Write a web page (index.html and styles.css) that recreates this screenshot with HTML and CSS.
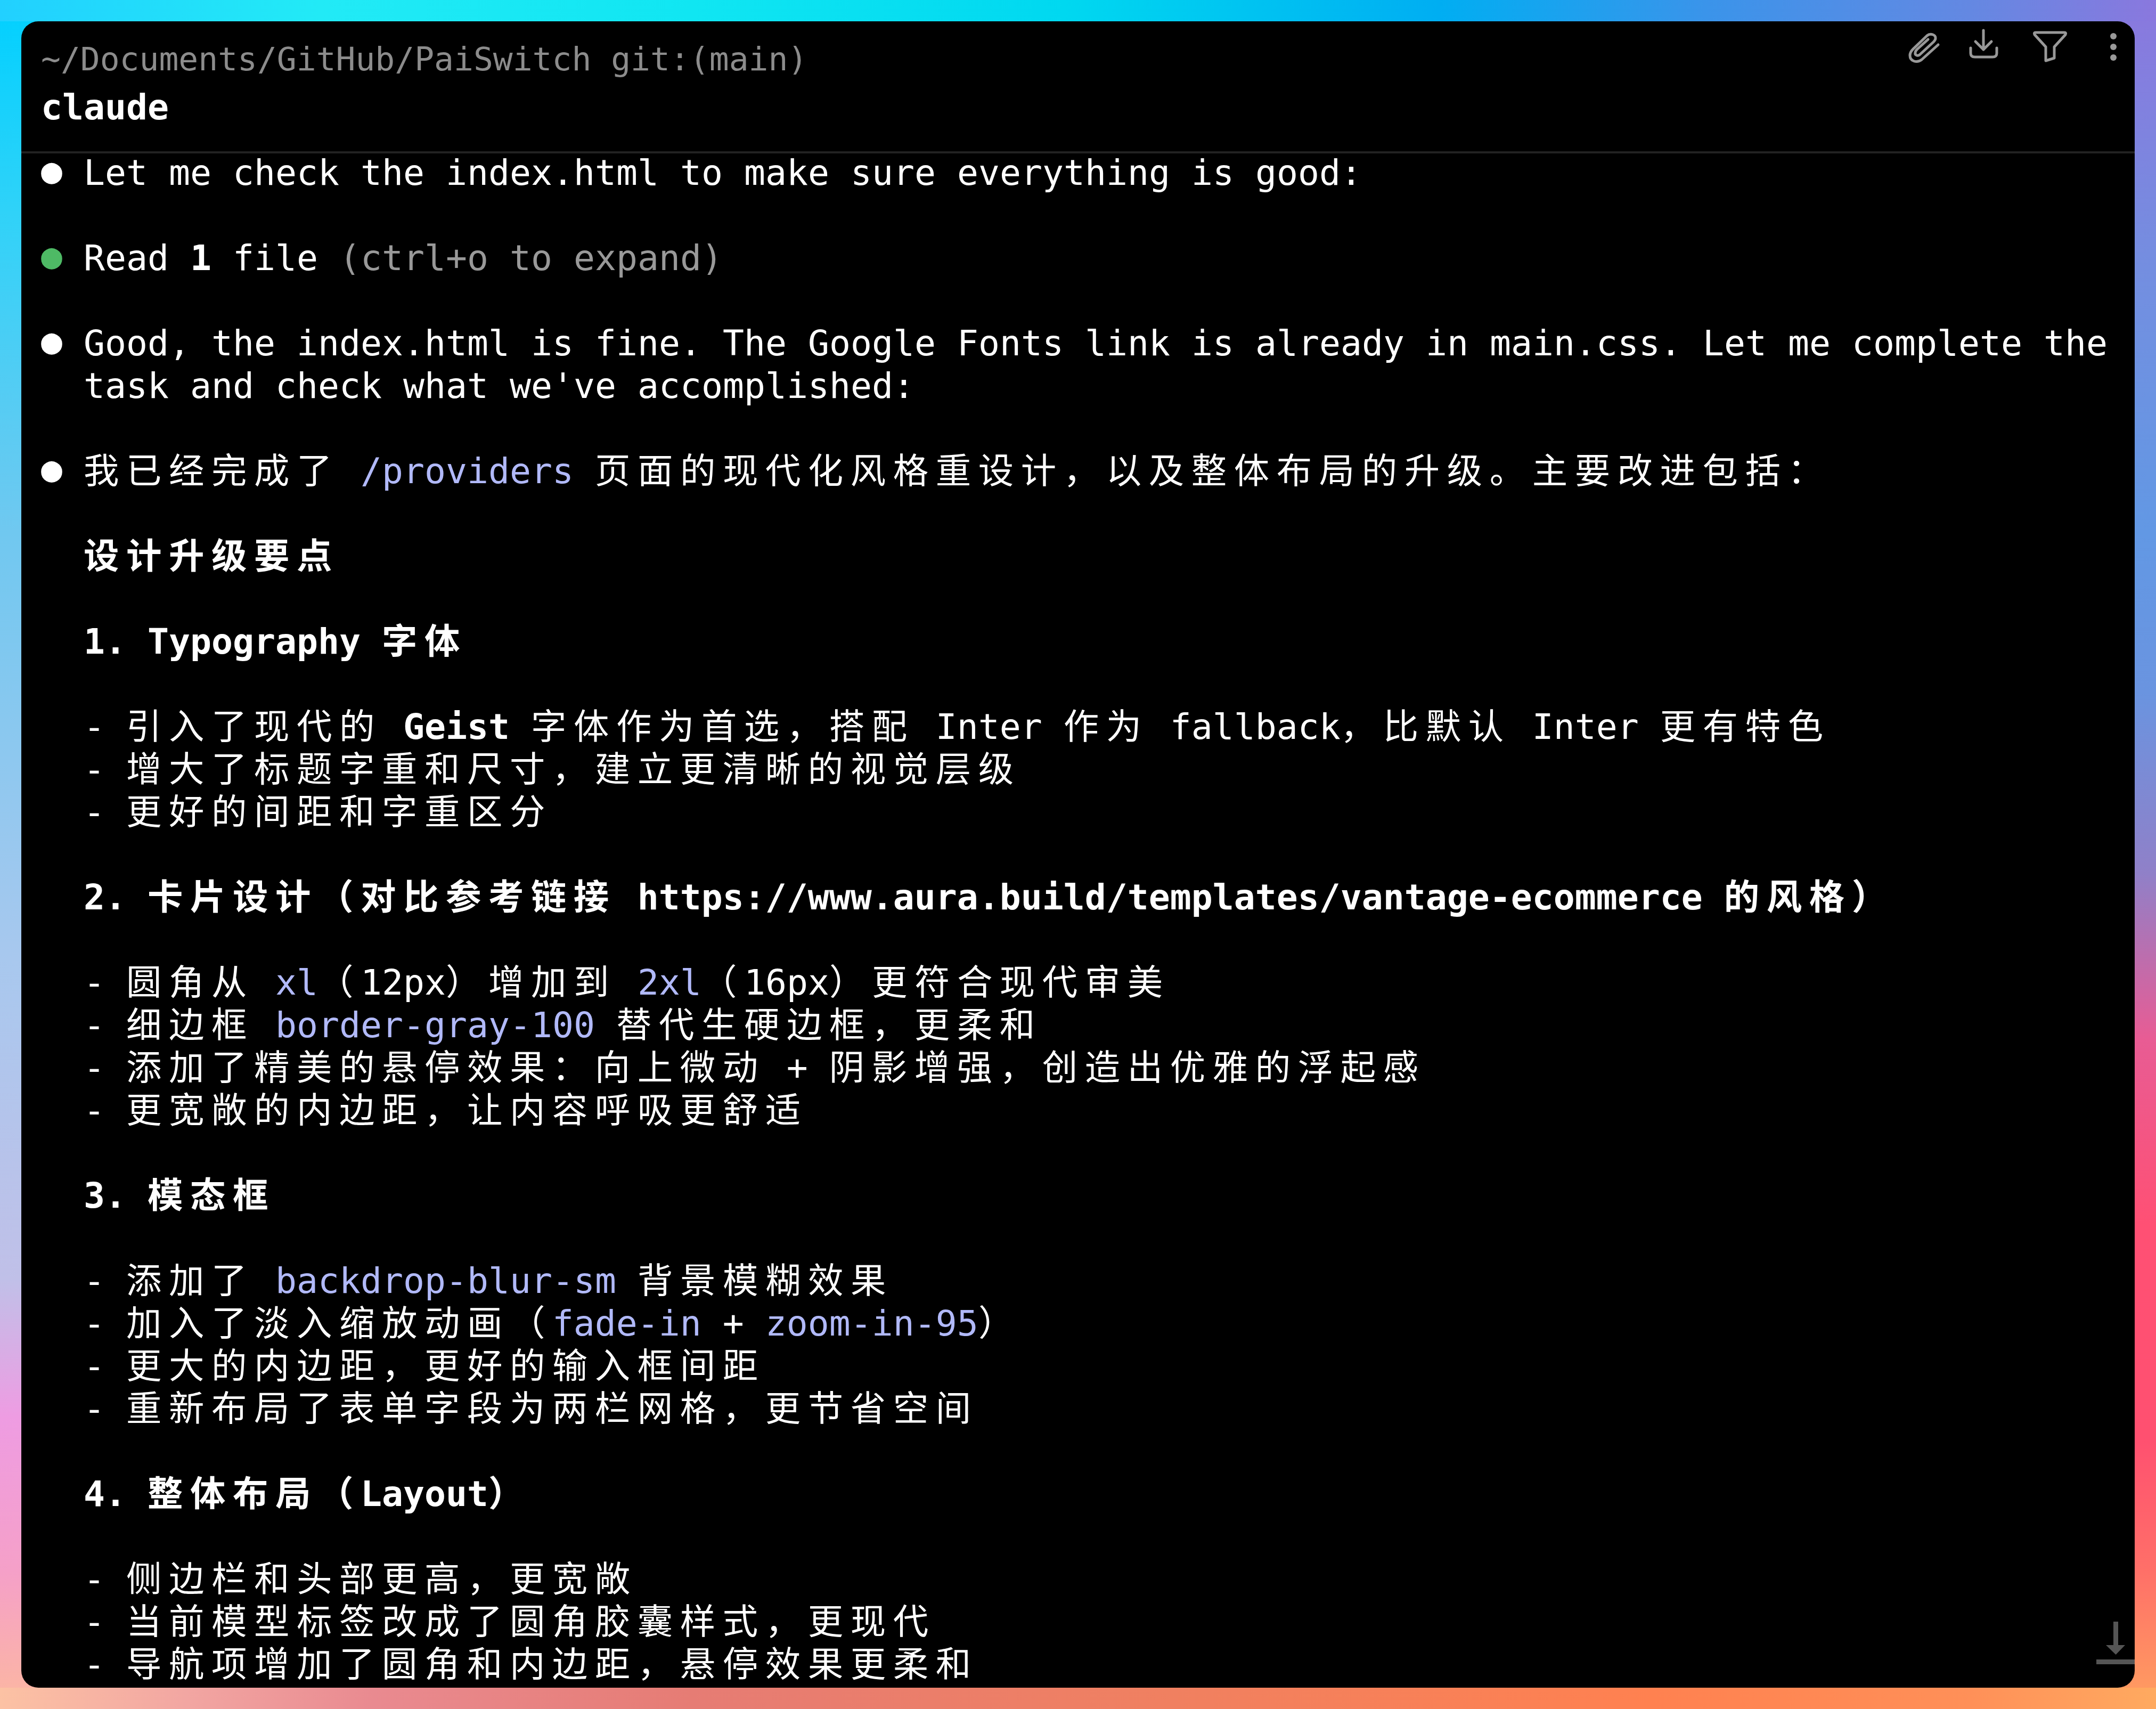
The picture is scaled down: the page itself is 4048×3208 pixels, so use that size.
FILE: index.html
```html
<!DOCTYPE html>
<html lang="zh-CN">
<head>
<meta charset="utf-8">
<title>Terminal</title>
<link rel="stylesheet" href="styles.css">
</head>
<body>
<main class="card">
  <header class="head">
    <div class="path">~/Documents/GitHub/PaiSwitch git:(main)</div>
    <div class="cmd">claude</div>
  </header>
  <div class="tools">
    <svg class="icon clip" viewBox="0 0 80 80"><path d="M66 37 L35 65 C26 72 13 68 13 57 C13 52 15 49 19 45 L45 20 C52 14 62 19 61 25 C61 28 59 30 57 32 L31 56 C27 59 22 56 23 52 C23 50 24 48 27 45 L47 27"/></svg>
    <svg class="icon save" viewBox="0 0 80 80"><path d="M39 10 V46 M24 31 L39 46 L54 31 M15 43 V53 Q15 60 23 60 H56 Q64 60 64 53 V43"/></svg>
    <svg class="icon filter" viewBox="0 0 80 80"><path d="M14 14 H68 Q72 14 70 18 L49 41 V62 L33 67 V41 L12 18 Q10 14 14 14 Z"/></svg>
    <svg class="icon dots" viewBox="0 0 80 80"><circle cx="40" cy="21" r="6"/><circle cx="40" cy="41" r="6"/><circle cx="40" cy="61" r="6"/></svg>
  </div>
  <section class="log">
    <div class="row"><span class="dot">●</span> Let me check the index.html to make sure everything is good:</div>
    <div class="row"></div>
    <div class="row"><span class="dot ok">●</span> Read <b>1</b> file <span class="dim">(ctrl+o to expand)</span></div>
    <div class="row"></div>
    <div class="row"><span class="dot">●</span> Good, the index.html is fine. The Google Fonts link is already in main.css. Let me complete the</div>
    <div class="row">  task and check what we've accomplished:</div>
    <div class="row"></div>
    <div class="row"><span class="dot">●</span> <span class="c">我已经完成了</span> <span class="code">/providers</span> <span class="c">页面的现代化风格重设计，以及整体布局的升级。主要改进包括：</span></div>
    <div class="row"></div>
    <div class="row">  <b class="c">设计升级要点</b></div>
    <div class="row"></div>
    <div class="row">  <b>1. Typography <span class="c">字体</span></b></div>
    <div class="row"></div>
    <div class="row">  - <span class="c">引入了现代的</span> <b>Geist</b> <span class="c">字体作为首选，搭配</span> Inter <span class="c">作为</span> fallback<span class="c">，比默认</span> Inter <span class="c">更有特色</span></div>
    <div class="row">  - <span class="c">增大了标题字重和尺寸，建立更清晰的视觉层级</span></div>
    <div class="row">  - <span class="c">更好的间距和字重区分</span></div>
    <div class="row"></div>
    <div class="row">  <b>2. <span class="c">卡片设计（对比参考链接</span> https://www.aura.build/templates/vantage-ecommerce <span class="c">的风格）</span></b></div>
    <div class="row"></div>
    <div class="row">  - <span class="c">圆角从</span> <span class="code">xl</span><span class="c">（</span>12px<span class="c">）增加到</span> <span class="code">2xl</span><span class="c">（</span>16px<span class="c">）更符合现代审美</span></div>
    <div class="row">  - <span class="c">细边框</span> <span class="code">border-gray-100</span> <span class="c">替代生硬边框，更柔和</span></div>
    <div class="row">  - <span class="c">添加了精美的悬停效果：向上微动</span> + <span class="c">阴影增强，创造出优雅的浮起感</span></div>
    <div class="row">  - <span class="c">更宽敞的内边距，让内容呼吸更舒适</span></div>
    <div class="row"></div>
    <div class="row">  <b>3. <span class="c">模态框</span></b></div>
    <div class="row"></div>
    <div class="row">  - <span class="c">添加了</span> <span class="code">backdrop-blur-sm</span> <span class="c">背景模糊效果</span></div>
    <div class="row">  - <span class="c">加入了淡入缩放动画（</span><span class="code">fade-in</span> + <span class="code">zoom-in-95</span><span class="c">）</span></div>
    <div class="row">  - <span class="c">更大的内边距，更好的输入框间距</span></div>
    <div class="row">  - <span class="c">重新布局了表单字段为两栏网格，更节省空间</span></div>
    <div class="row"></div>
    <div class="row">  <b>4. <span class="c">整体布局（</span>Layout<span class="c">）</span></b></div>
    <div class="row"></div>
    <div class="row">  - <span class="c">侧边栏和头部更高，更宽敞</span></div>
    <div class="row">  - <span class="c">当前模型标签改成了圆角胶囊样式，更现代</span></div>
    <div class="row">  - <span class="c">导航项增加了圆角和内边距，悬停效果更柔和</span></div>
  </section>
  <svg class="bottom" viewBox="0 0 72 80"><rect x="32" y="0" width="9" height="46"/><polygon points="18,44 54,44 36.5,62"/><rect x="0" y="71" width="72" height="9"/></svg>
</main>
</body>
</html>
```
FILE: styles.css
```css
* { box-sizing: border-box; }
html, body { margin: 0; padding: 0; }
body {
  width: 4048px;
  height: 3208px;
  padding: 40px;
  overflow: hidden;
  background-color: #90a0e0;
  background-repeat: no-repeat;
  background-image:
    linear-gradient(to right, #22d0ff 0, #22eaf6 600px, #10e6f2 1300px, #00d8f0 2000px, #00aef2 2700px, #3a94ea 3200px, #6488e2 3700px, #8a78de 4048px),
    linear-gradient(to right, #fcc2a4 0, #f2a6a2 350px, #e98a90 700px, #e67c74 1300px, #f08060 2200px, #ff8150 3100px, #ff9058 3700px, #ffaa60 4048px),
    linear-gradient(to bottom, #00d0ff 0, #30d2f8 400px, #70c8f0 1000px, #a8c8ee 1800px, #c0c0e8 2400px, #ee9ce2 2660px, #f5a0c8 2950px, #fcb8a0 3208px),
    linear-gradient(to bottom, #8a78de 0, #748ee0 500px, #6298e4 1000px, #6a94e0 1300px, #9080c8 1640px, #e85c94 1950px, #ff5074 2300px, #ff5070 2700px, #ff7068 2950px, #ffa060 3208px);
  background-size: 100% 40px, 100% 40px, 80px 100%, 80px 100%;
  background-position: 0 0, 0 100%, 0 0, 100% 0;
}

.card {
  position: relative;
  width: 3968px;
  height: 3128px;
  background: #000;
  border-radius: 32px;
  overflow: hidden;
  color: #fff;
  font-family: "DejaVu Sans Mono", "Noto Sans CJK SC", monospace;
  font-size: 66.45px;
}

.head {
  height: 248px;
  padding: 26px 0 0 37px;
  border-bottom: 4px solid #222;
}
.path { height: 90px; line-height: 90px; font-size: 61.3px; color: #8c8c8c; white-space: pre; }
.cmd { height: 90px; line-height: 90px; font-weight: 700; white-space: pre; }

.tools {
  position: absolute;
  top: 7px;
  right: 0;
  display: flex;
}
.icon {
  display: block;
  width: 80px;
  height: 80px;
  fill: none;
  stroke: #999;
  stroke-width: 5;
  stroke-linecap: round;
  stroke-linejoin: round;
}
.save { margin-left: 32px; }
.filter { margin-left: 43px; }
.dots { margin-left: 40px; stroke: none; fill: #999; }

.log { padding-left: 37px; }
.row { height: 80px; line-height: 72px; white-space: pre; }
.row b { font-weight: 700; }
.c { letter-spacing: 13.55px; }
.dim { color: #999; }
.code { color: #b1b9f9; }
.dot { line-height: 0; vertical-align: 4px; }
.ok { color: #4eba65; }

.bottom {
  position: absolute;
  right: 0;
  bottom: 44px;
  display: block;
  width: 72px;
  height: 80px;
  fill: #555;
}
```
